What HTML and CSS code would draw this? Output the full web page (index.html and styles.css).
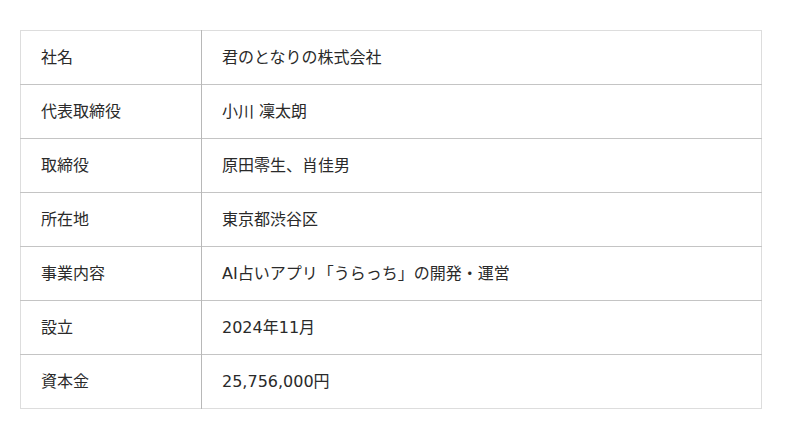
FILE: index.html
```html
<!DOCTYPE html>
<html lang="ja">
<head>
<meta charset="utf-8">
<link rel="stylesheet" href="styles.css">
</head>
<body>
<table class="info">
  <tbody>
    <tr><th>社名</th><td>君のとなりの株式会社</td></tr>
    <tr><th>代表取締役</th><td>小川 凜太朗</td></tr>
    <tr><th>取締役</th><td>原田零生、肖佳男</td></tr>
    <tr><th>所在地</th><td>東京都渋谷区</td></tr>
    <tr><th>事業内容</th><td>AI占いアプリ「うらっち」の開発・運営</td></tr>
    <tr><th>設立</th><td>2024年11月</td></tr>
    <tr><th>資本金</th><td>25,756,000円</td></tr>
  </tbody>
</table>
</body>
</html>
```
FILE: styles.css
```css
html, body {
  margin: 0;
  background: #ffffff;
}
body {
  padding: 30px 38px 0 20px;
  font-family: "DejaVu Sans", "Noto Sans CJK JP", sans-serif;
  font-size: 16px;
  color: #2a2a2a;
}
.info {
  width: 742px;
  border-collapse: collapse;
  border: 1px solid #dddddd;
}
.info th,
.info td {
  height: 54px;
  padding: 0 21px 3px 20px;
  box-sizing: border-box;
  text-align: left;
  font-weight: normal;
  vertical-align: middle;
  border-top: 1px solid #c4c4c4;
}
.info tr:first-child th,
.info tr:first-child td {
  border-top: 1px solid #dddddd;
}
.info th {
  width: 181px;
  border-right: 1px solid #b8b8b8;
}
```
